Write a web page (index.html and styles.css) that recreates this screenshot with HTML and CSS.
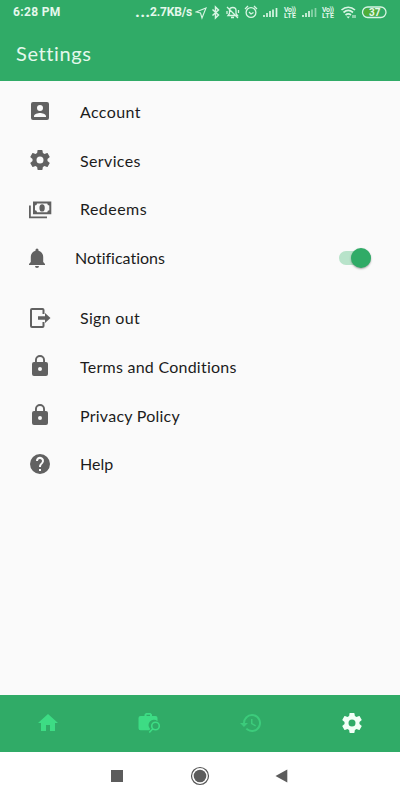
FILE: index.html
```html
<!DOCTYPE html>
<html lang="en">

<head>
    <meta charset="UTF-8">
    <meta name="viewport" content="width=device-width, initial-scale=1.0">
    <title>Settings</title>
    <link rel="stylesheet" href="styles.css">
</head>

<body>
    <header>
        <div class="statusbar">
            <span class="time">6:28 PM</span>
            <span class="dots">...</span>
            <span class="speed">2.7KB/s</span>
            <svg class="status-icons" width="192" height="24" viewBox="195 0 192 24" fill="none" stroke="#d8f5e3" stroke-width="1.1">
                <path d="M196 12l10-4-4 10-1.500-5z" />
                <path d="M212.500 9.500l6 5.500-3 3V7l3 3-6 5.500" stroke-width="1.500" />
                <path d="M228 15.500h9.500l-1.500-2v-3c0-4-6.500-4-6.500 0v3zM231 17.500h3M227 7l11 11M227 11v3M238.500 10v3" stroke-width="1.300" />
                <circle cx="251" cy="12.500" r="4.900" stroke-width="1.300" />
                <path d="M249 12l2 2 2.500-1.500M245 9l3-3M257 9l-3-3" stroke-width="1.300" />
                <path d="M264 17v-2M267 17v-4M270 17v-6M273 17V9.500M276.500 17V8" stroke-width="1.700" />
                <path d="M303 17v-2M306 17v-4M309 17v-6" stroke-width="1.700" />
                <path d="M312 17V9.500M315.500 17V8" stroke-width="1.700" opacity=".55" />
                <path d="M341.500 10c4-3.700 9.500-3.700 13.500 0M343.500 12.500c3-2.600 6.500-2.600 9.500 0M345.500 15c2-1.500 3.500-1.500 5.500 0" stroke-width="1.700" />
                <path d="M346.500 16.500h3.500l-1.750 2z" fill="#d8f5e3" stroke="none" />
                <path d="M353 15v3M355 15v3" />
                <rect x="362.500" y="7" width="23.500" height="10.500" rx="5.200" stroke-width="1.300" />
                <path d="M367.500 8.500h11.500v7.500h-11.500a3.750 3.750 0 0 1 0-7.500z" fill="#50ad38" stroke="none" />
                <g class="status-text" stroke="none" fill="#e4f8ec">
                    <text x="284" y="11.500" textLength="12">Vo))</text>
                    <text x="284" y="18" textLength="12">LTE</text>
                    <text x="322" y="11.500" textLength="12">Vo))</text>
                    <text x="322" y="18" textLength="12">LTE</text>
                    <text class="battery" x="369" y="16">37</text>
                </g>
            </svg>
        </div>
        <h1>Settings</h1>
    </header>

    <main>
        <ul class="menu">
            <li>
                <svg class="icon" viewBox="0 0 24 24"><path d="M3 5v14a2 2 0 0 0 2 2h14a2 2 0 0 0 2-2V5a2 2 0 0 0-2-2H5a2 2 0 0 0-2 2zm12 4a3 3 0 1 1-6 0 3 3 0 0 1 6 0zm-9 8c0-2 4-3.100 6-3.100s6 1.100 6 3.100v1H6z" /></svg>
                <span class="account">Account</span>
            </li>
            <li>
                <svg class="icon" viewBox="0 0 24 24"><path id="gear" d="M12 15.500A3.500 3.500 0 0 1 8.500 12 3.500 3.500 0 0 1 12 8.500a3.500 3.500 0 0 1 3.500 3.500 3.500 3.500 0 0 1-3.500 3.500m7.430-2.530c.04-.32.07-.64.07-.97s-.03-.66-.07-1l2.110-1.630c.19-.15.24-.42.12-.64l-2-3.460c-.12-.22-.39-.31-.61-.22l-2.490 1c-.52-.39-1.060-.73-1.690-.98l-.37-2.650A.506.506 0 0 0 14 2h-4c-.25 0-.46.18-.5.42l-.37 2.650c-.63.25-1.170.59-1.690.98l-2.490-1c-.22-.09-.49 0-.61.22l-2 3.460c-.13.22-.07.49.12.64L4.570 11c-.04.34-.07.67-.07 1s.03.650.07.970l-2.110 1.660c-.19.15-.25.42-.12.64l2 3.460c.12.22.39.3.61.22l2.490-1.010c.52.4 1.060.74 1.690.99l.37 2.650c.04.24.25.42.5.42h4c.25 0 .46-.18.5-.42l.37-2.650c.63-.26 1.170-.59 1.690-.99l2.490 1.010c.22.08.49 0 .61-.22l2-3.460c.12-.22.07-.49-.12-.64z" /></svg>
                <span class="services">Services</span>
            </li>
            <li>
                <svg class="icon" viewBox="0 0 24 24"><path fill-rule="evenodd" d="M5 4.500h18.300v12.800H5zM9 6.500a2 2 0 0 1-2 2v4.800a2 2 0 0 1 2 2h10.300a2 2 0 0 1 2-2V8.500a2 2 0 0 1-2-2zm5.100.8a2.600 3.500 0 1 1 0 7.200 2.600 3.500 0 0 1 0-7.200zM1 8.500h1.800v11H19v1.800H1z" /></svg>
                <span class="redeems">Redeems</span>
            </li>
            <li class="notifications">
                <svg class="icon" viewBox="0 0 24 24"><path d="M12 22a2 2 0 0 0 2-2h-4a2 2 0 0 0 2 2zm6.200-6v-5c0-3.070-1.700-5.640-4.700-6.320V4a1.500 1.500 0 0 0-3 0v.68C7.500 5.360 5.800 7.920 5.800 11v5L4 18v1h16v-1z" /></svg>
                <span class="notify">Notifications</span>
                <span class="switch"></span>
            </li>
        </ul>
        <ul class="menu">
            <li>
                <svg class="icon" viewBox="0 0 24 24"><path d="M14.500 8V4H4v16h10.500v-4h2v4a2 2 0 0 1-2 2H4a2 2 0 0 1-2-2V4a2 2 0 0 1 2-2h10.500a2 2 0 0 1 2 2v4zM10 10.200h7V7l5.500 5-5.500 5v-3.200h-7z" /></svg>
                <span class="signout">Sign out</span>
            </li>
            <li>
                <svg class="icon" viewBox="0 0 24 24"><path id="lock" d="M18 8h-1V6A5 5 0 0 0 7 6v2H6a2 2 0 0 0-2 2v10a2 2 0 0 0 2 2h12a2 2 0 0 0 2-2V10a2 2 0 0 0-2-2zm-6 9a2 2 0 1 1 0-4 2 2 0 0 1 0 4zm3.100-9H8.900V6a3.100 3.100 0 0 1 6.200 0z" /></svg>
                <span class="terms">Terms and Conditions</span>
            </li>
            <li>
                <svg class="icon" viewBox="0 0 24 24"><use href="#lock" /></svg>
                <span class="privacy">Privacy Policy</span>
            </li>
            <li>
                <svg class="icon" viewBox="0 0 24 24"><path d="M12 2a10 10 0 1 0 0 20 10 10 0 0 0 0-20zm1 17h-2v-2h2zm2.070-7.750l-.9.920C13.450 12.900 13 13.500 13 15h-2v-.5c0-1.100.45-2.100 1.170-2.830l1.240-1.260A2 2 0 1 0 10 9H8a4 4 0 1 1 7.070 2.250z" /></svg>
                <span class="help">Help</span>
            </li>
        </ul>
    </main>

    <nav class="tabs">
        <svg viewBox="0 0 24 24"><path d="M10 20v-6h4v6h5v-8h3L12 3 2 12h3v8z" /></svg>
        <svg viewBox="0 0 24 24">
            <path fill-rule="evenodd" d="M7.500 5V3.500L9 2h4.500L15 3.500V5h3.500a2 2 0 0 1 2 2v3.200A5.300 5.300 0 0 0 13.200 18l-1 1.200H3.500a2 2 0 0 1-2-2V7a2 2 0 0 1 2-2zm2 0h3.500V3.800H9.500z" />
            <path d="M22.300 15a3.800 3.800 0 1 1-7.600 0 3.800 3.800 0 0 1 7.600 0zM15.800 17.800l-3.500 3.700" fill="none" stroke="#3ddc84" stroke-width="1.600" />
        </svg>
        <svg class="history" viewBox="0 0 24 24"><path d="M13.500 8H12v5l4.280 2.540.72-1.210-3.500-2.080V8M13 3a9 9 0 0 0-9 9H1l3.960 4.030L9 12H6a7 7 0 1 1 2.060 4.940l-1.420 1.420A9 9 0 1 0 13 3" /></svg>
        <svg class="active" viewBox="0 0 24 24"><use href="#gear" /></svg>
    </nav>

    <footer class="sysnav">
        <svg viewBox="0 0 24 24"><path d="M6 6h12v12H6z" /></svg>
        <svg viewBox="0 0 24 24"><circle cx="12" cy="12" r="8.500" fill="none" stroke="#555" stroke-width="1.200" /><circle cx="12" cy="12" r="6.300" /></svg>
        <svg viewBox="0 0 24 24"><path d="M16.300 5.500v13L4.500 12z" /></svg>
    </footer>
</body>

</html>
```
FILE: styles.css
```css
body {
    margin: 0;
    height: 800px;
    display: flex;
    flex-direction: column;
    overflow: hidden;
    background-color: #fafafa;
    font-family: Lato, "Open Sans", sans-serif;
    font-variant-ligatures: none;
}

header {
    height: 81px;
    background-color: #30ab67;
    color: #e4f8ec;
}

.statusbar {
    display: flex;
    height: 25px;
    padding-left: 13px;
    font: 700 12px/25px Roboto, sans-serif;
    white-space: nowrap;
}

.time {
    width: 122px;
    letter-spacing: 0.35px;
}

.dots {
    width: 15px;
    font-size: 17px;
    line-height: 22px;
    letter-spacing: 0.2px;
}

.speed {
    width: 45px;
    letter-spacing: -0.15px;
}

.status-icons {
    flex: none;
}

.status-text {
    font: 700 7px Roboto, sans-serif;
}

.status-text .battery {
    font-size: 10px;
}

h1 {
    margin: 0;
    padding-left: 16px;
    font-size: 20px;
    font-weight: 400;
    line-height: 56px;
    letter-spacing: 0.6px;
}

main {
    flex: 1;
    padding-top: 6px;
}

.menu {
    margin: 0 0 11px;
    padding: 0 28px;
    list-style: none;
}

.menu li {
    display: flex;
    align-items: center;
    height: 48.8px;
    font-size: 16px;
    color: #1c1c1c;
}

.icon {
    width: 24px;
    height: 24px;
    margin-right: 28px;
    fill: #616161;
}

.menu .notifications {
    margin: 0 1px 0 -3px;
}

.notifications .icon {
    margin-right: 26px;
}

.account,
.services {
    letter-spacing: 0.37px;
}

.redeems {
    letter-spacing: 0.45px;
}

.signout {
    letter-spacing: 0.3px;
}

.terms,
.privacy {
    letter-spacing: 0.25px;
}

.switch {
    display: flex;
    justify-content: flex-end;
    align-items: center;
    width: 32px;
    height: 14px;
    margin-left: auto;
    border-radius: 7px;
    background-color: #b8e3ca;
}

.switch::after {
    content: "";
    width: 20px;
    height: 20px;
    flex: none;
    border-radius: 50%;
    background-color: #30ab67;
    box-shadow: 0 1px 2px rgba(0, 0, 0, 0.35);
}

.tabs {
    display: flex;
    align-items: center;
    height: 55px;
    padding: 0 36px 2px;
    justify-content: space-between;
    background-color: #30ab67;
}

.tabs svg {
    width: 24px;
    height: 24px;
    fill: #3ddc84;
}

.tabs .history {
    fill: #3ccb7b;
}

.tabs .active {
    fill: #f1fff6;
}

.sysnav {
    display: flex;
    align-items: center;
    justify-content: center;
    gap: 59px;
    height: 48px;
    background-color: #fff;
}

.sysnav svg {
    width: 24px;
    height: 24px;
    fill: #5c5c5c;
}
```
